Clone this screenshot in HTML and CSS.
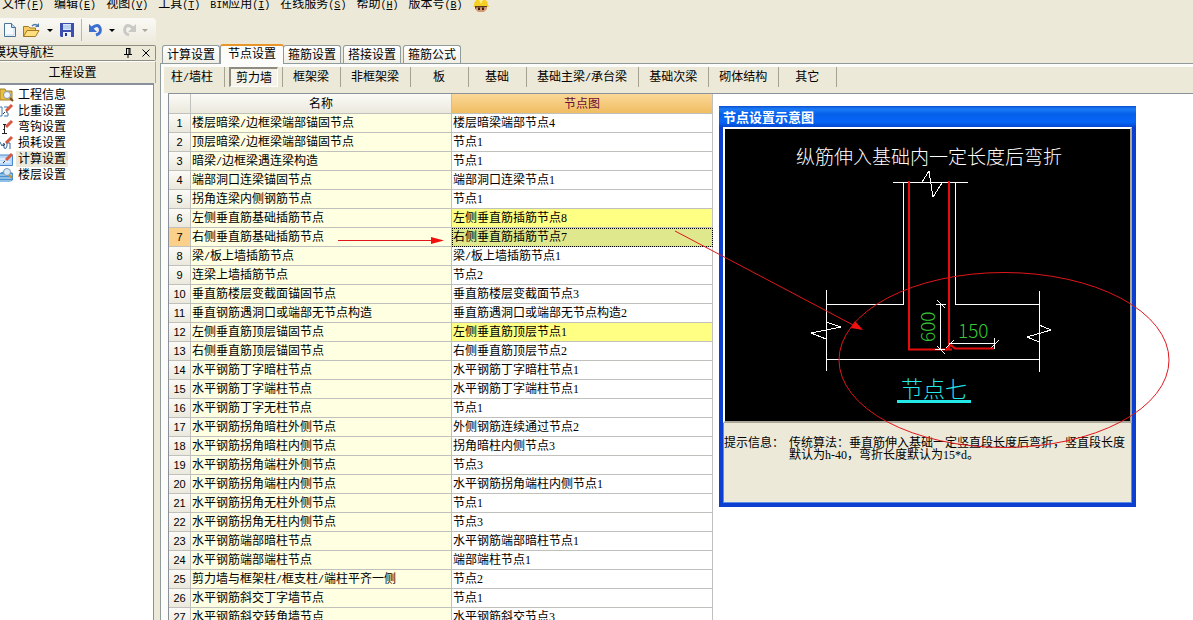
FILE: index.html
```html
<!DOCTYPE html>
<html lang="zh-CN">
<head>
<meta charset="utf-8">
<title>节点设置</title>
<link rel="stylesheet" href="styles.css">
</head>
<body>
<nav class="menubar">
<button>文件<span class="key">(<u>F</u>)</span></button>
<button>编辑<span class="key">(<u>E</u>)</span></button>
<button>视图<span class="key">(<u>V</u>)</span></button>
<button>工具<span class="key">(<u>T</u>)</span></button>
<button><span class="key">BIM</span>应用<span class="key">(<u>I</u>)</span></button>
<button>在线服务<span class="key">(<u>S</u>)</span></button>
<button>帮助<span class="key">(<u>H</u>)</span></button>
<button>版本号<span class="key">(<u>B</u>)</span></button>
<svg class="worker" width="16" height="12" viewBox="0 0 16 12"><path d="M1 5Q1 -1 8 -1T15 5L16 7H0Z" fill="#f5cf22"/><path d="M6 0L8 4 10 0" fill="#fff08a"/><path d="M2 6H14V9L11 12H5L2 9Z" fill="#d29a72"/><path d="M2 6H14V7H12L10 8 8 7 6 8 4 7 2 9Z" fill="#5d3820"/><path d="M5 8H7V10H5ZM9 8H11V10H9Z" fill="#3a1b12"/></svg>
</nav>
<div class="toolbar">
<button aria-label="新建"><svg width="12" height="14" viewBox="0 0 12 14"><path d="M.5 .5H7.5L11.500 4.500V13.500H.5Z" fill="#f4faff" stroke="#4a7396"/><path d="M7.500 .5V4.500H11.500" fill="#bcd8ee" stroke="#4a7396"/><path d="M10 5V12H2" fill="none" stroke="#c4daf0"/></svg></button>
<button class="split" aria-label="打开"><svg width="18" height="15" viewBox="0 0 18 15"><path d="M.5 13.500V3.500H5.500L7 5H12.500V8" fill="#f4cc62" stroke="#a37a22"/><path d="M.5 13.500L4 7.500H16L12.500 13.500Z" fill="#ffdf7e" stroke="#a37a22"/><path d="M9 3Q12 0 15 3" fill="none" stroke="#4a78aa" stroke-width="1.500"/><path d="M12 4H16V0Z" fill="#4a78aa"/></svg><i class="caret"></i></button>
<button aria-label="保存"><svg width="14" height="14" viewBox="0 0 14 14"><path d="M0 0H14V14H1L0 13Z" fill="#3d4fae"/><path d="M3 1H11V7H3Z" fill="#d9e8fb"/><path d="M3 3H11M3 5H11" stroke="#9cb9e2"/><path d="M3 9H11V14H3Z" fill="#eef1f8"/><path d="M5 10H7V13H5Z" fill="#26358c"/></svg></button>
<span class="tool-line"></span>
<button class="split" aria-label="撤销"><svg width="14" height="14" viewBox="0 0 14 14"><path d="M3 5Q9 0 11 5T7 12" fill="none" stroke="#3b70d2" stroke-width="3"/><path d="M0 1V9H8Z" fill="#3b70d2"/></svg><i class="caret"></i></button>
<button class="split off" aria-label="恢复"><svg width="14" height="14" viewBox="0 0 14 14"><path d="M11 5Q5 0 3 5T7 12" fill="none" stroke="#c9c9c5" stroke-width="3"/><path d="M14 1V9H6Z" fill="#c9c9c5"/></svg><i class="caret"></i></button>
</div>
<div class="workspace">
<aside class="dock">
<div class="dock-title"><span class="dock-name">模块导航栏</span>
<button aria-label="固定"><svg width="8" height="10" viewBox="0 0 8 10"><path d="M2 .5H6M2.500 0V6M5 0V6M6 0V6M0 6.500H8M4 6V10" fill="none" stroke="#000"/></svg></button>
<button aria-label="关闭"><svg width="8" height="8" viewBox="0 0 8 8"><path d="M.5 .5L7.500 7.500M7.500 .5L.5 7.500" stroke="#000"/></svg></button></div>
<button class="dock-head">工程设置</button>
<ul class="tree">
<li><svg width="14" height="16" viewBox="0 0 14 16"><path d="M0 2H5L6 4H12V13H0Z" fill="#e9bf42" stroke="#a48224"/><circle cx="7" cy="8" r="3.500" fill="#eef7ff" stroke="#8793a0"/><path d="M10 11L13 14" stroke="#774d1d" stroke-width="2"/></svg><a href="#info">工程信息</a></li>
<li><svg width="14" height="16" viewBox="0 0 14 16"><path d="M0 4H2V13H0M4 4H8V7L6 9L8 10V13H4" fill="none" stroke="#3f79b5"/><path d="M6 8L12 2" stroke="#d8573f" stroke-width="3"/><path d="M3 11L5 9" stroke="#333"/></svg><a href="#weight">比重设置</a></li>
<li><svg width="14" height="16" viewBox="0 0 14 16"><path d="M4.500 5V14M2 14.500H7M3 5.500H6" fill="none" stroke="#222"/><path d="M6 8L12 2" stroke="#d8573f" stroke-width="3"/><path d="M3 11L5 9" stroke="#333"/></svg><a href="#hook">弯钩设置</a></li>
<li><svg width="14" height="16" viewBox="0 0 14 16"><path d="M0 7L2 11L4 8V13Q6 15 7 11V8H10V14" fill="none" stroke="#36689a"/><path d="M6 8L12 2" stroke="#d8573f" stroke-width="3"/><path d="M3 11L5 9" stroke="#333"/></svg><a href="#loss">损耗设置</a></li>
<li><svg width="14" height="16" viewBox="0 0 14 16"><path d="M-1 4H12.500V14.500H-1Z" fill="#b9d9fa" stroke="#4686cf"/><path d="M0 8H9M0 11H10" stroke="#fff"/><path d="M6 9L12 3" stroke="#d8573f" stroke-width="3"/><path d="M3 12L5 10" stroke="#333"/></svg><a class="chosen" href="#calc">计算设置</a></li>
<li><svg width="14" height="16" viewBox="0 0 14 16"><path d="M0 6L6 3L13 6V13L10 15H0Z" fill="#4b91cf"/><path d="M0 8H12M0 11H12M0 14H11" stroke="#d7efff"/><circle cx="7" cy="5" r="3.500" fill="#d7eafa" stroke="#8199ac"/><path d="M9 8L12 11" stroke="#c49435" stroke-width="2"/></svg><a href="#floor">楼层设置</a></li>
</ul>
</aside>
<main class="main">
<div class="tabs">
<button>计算设置</button><button class="active">节点设置</button><button>箍筋设置</button><button>搭接设置</button><button>箍筋公式</button>
</div>
<section class="panel">
<div class="kinds">
<button>柱<span class="key">/</span>墙柱</button><button class="pressed"><span>剪力墙</span></button><button>框架梁</button><button>非框架梁</button><button>板</button><button>基础</button><button>基础主梁<span class="key">/</span>承台梁</button><button>基础次梁</button><button>砌体结构</button><button>其它</button>
</div>
<div class="view">
<table class="grid">
<colgroup><col class="c-num"><col class="c-name"><col class="c-node"></colgroup>
<thead><tr><th></th><th>名称</th><th class="hot">节点图</th></tr></thead>
<tbody>
<tr><th>1</th><td>楼层暗梁<span class="key">/</span>边框梁端部锚固节点</td><td>楼层暗梁端部节点4</td></tr>
<tr><th>2</th><td>顶层暗梁<span class="key">/</span>边框梁端部锚固节点</td><td>节点1</td></tr>
<tr><th>3</th><td>暗梁<span class="key">/</span>边框梁遇连梁构造</td><td>节点1</td></tr>
<tr><th>4</th><td>端部洞口连梁锚固节点</td><td>端部洞口连梁节点1</td></tr>
<tr><th>5</th><td>拐角连梁内侧钢筋节点</td><td>节点1</td></tr>
<tr class="changed"><th>6</th><td>左侧垂直筋基础插筋节点</td><td>左侧垂直筋插筋节点8</td></tr>
<tr class="current"><th>7</th><td>右侧垂直筋基础插筋节点</td><td>右侧垂直筋插筋节点7</td></tr>
<tr><th>8</th><td>梁<span class="key">/</span>板上墙插筋节点</td><td>梁<span class="key">/</span>板上墙插筋节点1</td></tr>
<tr><th>9</th><td>连梁上墙插筋节点</td><td>节点2</td></tr>
<tr><th>10</th><td>垂直筋楼层变截面锚固节点</td><td>垂直筋楼层变截面节点3</td></tr>
<tr><th>11</th><td>垂直钢筋遇洞口或端部无节点构造</td><td>垂直筋遇洞口或端部无节点构造2</td></tr>
<tr class="changed"><th>12</th><td>左侧垂直筋顶层锚固节点</td><td>左侧垂直筋顶层节点1</td></tr>
<tr><th>13</th><td>右侧垂直筋顶层锚固节点</td><td>右侧垂直筋顶层节点2</td></tr>
<tr><th>14</th><td>水平钢筋丁字暗柱节点</td><td>水平钢筋丁字暗柱节点1</td></tr>
<tr><th>15</th><td>水平钢筋丁字端柱节点</td><td>水平钢筋丁字端柱节点1</td></tr>
<tr><th>16</th><td>水平钢筋丁字无柱节点</td><td>节点1</td></tr>
<tr><th>17</th><td>水平钢筋拐角暗柱外侧节点</td><td>外侧钢筋连续通过节点2</td></tr>
<tr><th>18</th><td>水平钢筋拐角暗柱内侧节点</td><td>拐角暗柱内侧节点3</td></tr>
<tr><th>19</th><td>水平钢筋拐角端柱外侧节点</td><td>节点3</td></tr>
<tr><th>20</th><td>水平钢筋拐角端柱内侧节点</td><td>水平钢筋拐角端柱内侧节点1</td></tr>
<tr><th>21</th><td>水平钢筋拐角无柱外侧节点</td><td>节点1</td></tr>
<tr><th>22</th><td>水平钢筋拐角无柱内侧节点</td><td>节点3</td></tr>
<tr><th>23</th><td>水平钢筋端部暗柱节点</td><td>水平钢筋端部暗柱节点1</td></tr>
<tr><th>24</th><td>水平钢筋端部端柱节点</td><td>端部端柱节点1</td></tr>
<tr><th>25</th><td>剪力墙与框架柱<span class="key">/</span>框支柱<span class="key">/</span>端柱平齐一侧</td><td>节点2</td></tr>
<tr><th>26</th><td>水平钢筋斜交丁字墙节点</td><td>节点1</td></tr>
<tr><th>27</th><td>水平钢筋斜交转角墙节点</td><td>水平钢筋斜交节点3</td></tr>
</tbody>
</table>
</div>
</section>
</main>
</div>
<section class="dialog">
<h2>节点设置示意图</h2>
<div class="dialog-body">
<svg class="drawing" viewBox="725 129 405 292">
<text class="cad" x="796" y="164" font-size="19" fill="#fff">纵筋伸入基础内一定长度后弯折</text>
<g fill="none" stroke="#fff" shape-rendering="crispEdges">
<path d="M893 182.500H968M903.500 182V304.500H826.500M955.500 182V304.500H1039.500M826.500 290V371M1039.500 291V372M826 359.500H1040"/>
<path d="M922 182L929 171L933 197L942 183M826 322L841 327L811 333L826 339M1039 325L1051 330L1027 337L1039 342"/>
<path d="M940.500 304V350M936 304.500H946M937 300L945 308M994.500 338V349M991 348L999 340"/>
</g>
<path d="M909 181V349.500H952M949 181V349" fill="none" stroke="#e80c0c" stroke-width="2"/>
<path d="M946 350L951 345L955 348.500H994" fill="none" stroke="#e80c0c" stroke-width="2"/>
<path d="M949 343.500H995M940.500 330V350M935 349.500H945M937 346L945 354M946 348L954 340" fill="none" stroke="#fff" shape-rendering="crispEdges"/>
<text class="cad" x="958" y="338" font-size="19" fill="#35c735">150</text>
<text class="cad" transform="translate(935 342) rotate(-90)" font-size="19" fill="#35c735">600</text>
<text class="cad" x="901" y="397" font-size="22" fill="#22e8e8">节点七</text>
<path d="M897 401.500H971" stroke="#22e8e8" stroke-width="3"/>
</svg>
<dl class="hint"><dt>提示信息：</dt><dd>传统算法：垂直筋伸入基础一定竖直段长度后弯折，竖直段长度默认为h-40，弯折长度默认为15*d。</dd></dl>
</div>
</section>
<svg class="marks" width="1193" height="620" viewBox="0 0 1193 620">
<g fill="none" stroke="#e0161c"><path d="M338 240.500H433M675 231L855 326"/><ellipse cx="1004" cy="360" rx="165" ry="87.500"/></g>
<path d="M431 237L444 240.500L431 244ZM855 321L863 330L851 328Z" fill="#f01010"/>
</svg>
</body>
</html>
```
FILE: styles.css
```css
* { box-sizing: border-box; }
body {
  margin: 0;
  height: 100vh;
  overflow: hidden;
  display: flex;
  flex-direction: column;
  position: relative;
  background: #ece9d8;
  color: #000;
  font: 12px/16px "Liberation Serif", "Noto Sans CJK SC", sans-serif;
}
button {
  margin: 0;
  padding: 0;
  border: 0;
  background: none;
  color: inherit;
  font: inherit;
  white-space: nowrap;
}
svg { display: block; flex: none; }

.menubar {
  display: flex;
  align-items: center;
  gap: 10px;
  height: 18px;
  padding: 0 2px 8px;
}
.menubar button { line-height: 10px; }
.key { font: 10px/10px "Liberation Mono", monospace; }
.worker { align-self: flex-start; }

.toolbar {
  display: flex;
  align-items: center;
  align-self: flex-start;
  gap: 7px;
  width: 156px;
  height: 24px;
  padding-left: 4px;
  border-radius: 0 4px 4px 0;
  background: linear-gradient(#faf9f5, #eeebdf);
}
.split { display: flex; align-items: center; gap: 6px; }
.caret {
  border: 3px solid transparent;
  border-top-color: #000;
  border-bottom: 0;
}
.off .caret { border-top-color: #aaa89b; }
.tool-line { height: 22px; border-left: 1px solid #b9b7a8; }

.workspace { display: flex; flex: 1; gap: 4px; min-height: 0; padding-top: 2px; }
.dock { display: flex; flex-direction: column; flex: none; width: 156px; }
.dock-title {
  display: flex;
  align-items: center;
  gap: 10px;
  height: 16px;
  margin-top: 1px;
  padding-right: 5px;
  overflow: hidden;
  border: 1px solid #8e8d83;
  border-left: 0;
  border-radius: 0 2px 2px 0;
}
.dock-name { flex: 1; text-indent: -6px; }
.dock-head {
  height: 22px;
  padding-right: 10px;
  border-top: 1px solid #fff;
  border-right: 1px solid #aca899;
}
.tree {
  flex: 1;
  margin: 0 2px 0 0;
  padding: 2px 0 0;
  list-style: none;
  background: #fff;
  border-top: 2px solid #8b919b;
  border-right: 1px solid #8b919b;
}
.tree li { display: flex; gap: 2px; height: 16px; }
.tree a { padding: 0 2px; color: #000; text-decoration: none; }
.tree .chosen { background: #ece9d8; }

.main { display: flex; flex: 1; flex-direction: column; min-width: 0; }
.tabs { display: flex; align-items: flex-end; gap: 2px; height: 19px; padding-left: 2px; }
.tabs button {
  height: 18px;
  padding: 0 4px;
  border: 1px solid #919b9c;
  border-bottom: 0;
  border-radius: 3px 3px 0 0;
  background: linear-gradient(#fff, #f0efe6);
}
.tabs .active {
  height: 20px;
  margin: 0 -3px -1px -2px;
  padding: 0 7px 2px;
  border-top: 2px solid #e8962a;
  background: #fcfcfa;
  position: relative;
}
.panel {
  display: flex;
  flex: 1;
  flex-direction: column;
  min-height: 0;
  padding: 3px 0 0 3px;
  border: 1px solid #919b9c;
  border-width: 1px 0 0 1px;
  background: #fcfcfa;
}
.kinds { display: flex; height: 26px; padding-bottom: 6px; background: #ece9d8; }
.kinds button {
  min-width: 58px;
  padding: 0 11px 0 10px;
  border-right: 1px solid #a5a294;
}
.kinds button:first-child { padding-left: 7px; }
.kinds .pressed { padding: 0 4px; }
.pressed span {
  display: block;
  height: 20px;
  padding: 1px 0 0;
  border: 1px solid #fff;
  border-top: 2px solid #8e8c80;
  border-left: 2px solid #8e8c80;
  background: #f5f3ea;
}
.view {
  flex: 1;
  min-height: 0;
  margin-left: 4px;
  overflow: hidden;
  border: 1px solid #8b919b;
  border-width: 1px 0 0 1px;
  background: #fff;
}
.grid { width: 544px; table-layout: fixed; border-spacing: 0; }
.c-num { width: 22px; }
.c-name, .c-node { width: 261px; }
.grid th, .grid td {
  height: 19px;
  padding: 0 1px;
  border: 1px solid #c0c0bc;
  border-width: 0 1px 1px 0;
  font-weight: 400;
  line-height: 18px;
  white-space: nowrap;
}
.grid th { background: linear-gradient(#fbfaf6, #ebe9dd); text-align: center; }
.grid thead th { height: 20px; }
.grid tbody th { font-family: "Liberation Sans", sans-serif; font-size: 11px; }
.grid td:nth-child(2) { background: #ffffe1; }
.grid .hot { background: linear-gradient(#fbd898, #efbd62); color: #6a0c35; }
.changed td:last-child { background: #ffff84; }
.grid .current th { background: #fbd08a; }
.grid .current td:last-child { background: #dfe88c; outline: 1px dotted #000; outline-offset: -1px; }

.dialog {
  position: absolute;
  left: 719px;
  top: 106px;
  width: 417px;
  border: solid #0c3fd0;
  border-width: 0 4px 4px;
  box-shadow: inset 0 0 0 1px #5b8be8;
  background: #ece9d8;
}
.dialog h2 {
  margin: 0 -4px;
  padding-left: 4px;
  height: 21px;
  background: linear-gradient(#0a4fd0, #1c7cf5 3px, #0560ea 8px, #0666f8 16px, #0448ce);
  color: #fff;
  font: 700 13px/22px "Noto Sans CJK SC", sans-serif;
}
.dialog-body { height: 376px; }
.drawing {
  width: 100%;
  height: 296px;
  border: 2px solid #fff;
  border-right-color: #aca899;
  border-bottom-color: #aca899;
  background: #000;
}
.cad { font-family: "Noto Sans CJK SC", sans-serif; font-weight: 300; }
.hint { display: flex; gap: 5px; margin: 0; padding: 14px 4px 0 1px; line-height: 12px; }
.hint dt { flex: none; }
.hint dd { margin: 0; }
.marks { position: absolute; left: 0; top: 0; pointer-events: none; }
```
